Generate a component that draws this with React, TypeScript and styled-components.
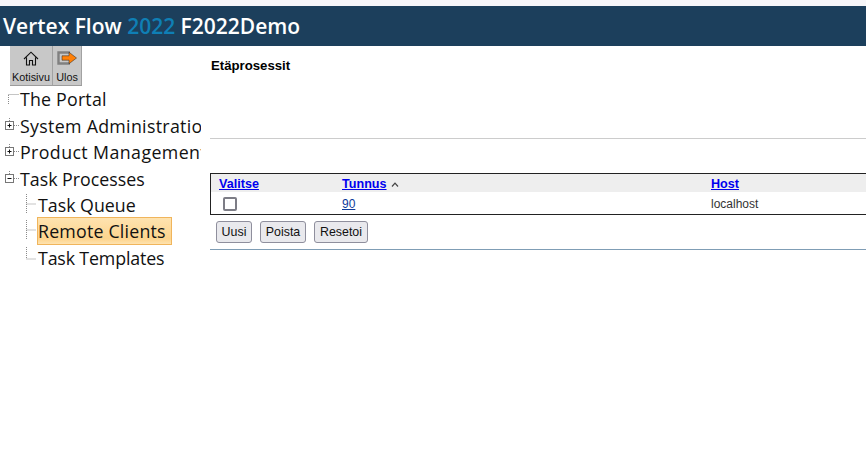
import React from "react";
import styled, { createGlobalStyle } from "styled-components";

const GlobalStyle = createGlobalStyle`
  html, body {
    margin: 0;
    padding: 0;
    background: #ffffff;
    font-family: "Liberation Sans", Arial, sans-serif;
  }
`;

const Page = styled.div`
  width: 866px;
  height: 452px;
  overflow: hidden;
  background: #ffffff;
  display: flex;
  flex-direction: column;
`;

const TopStrip = styled.div`
  height: 6px;
  flex: none;
  background: #f6f6f9;
`;

const Header = styled.div`
  height: 40px;
  flex: none;
  background: #1c3f5c;
  color: #ffffff;
  display: flex;
  align-items: center;
  padding-left: 3px;
  font-family: "Open Sans", "Noto Sans", sans-serif;
  font-size: 21px;
  font-weight: 600;
  white-space: pre;
`;

const Year = styled.span`
  color: #0f7fb5;
`;

const Body = styled.div`
  display: flex;
  flex: 1;
`;

const Sidebar = styled.div`
  width: 201px;
  margin-right: 9px;
  flex: none;
  overflow: hidden;
`;

const Toolbar = styled.div`
  display: flex;
  margin-left: 10px;
  width: 72px;
  height: 40px;
  background: #c8c8c8;
  border-bottom: 1px solid #9c9c9c;
  box-sizing: border-box;
`;

const ToolButton = styled.div<{ $w: number }>`
  width: ${(p) => p.$w}px;
  display: flex;
  flex-direction: column;
  align-items: center;
  justify-content: space-between;
  padding: 5px 0 2px;
  box-sizing: border-box;
  border-right: 1px solid #a2a2a2;
  font-size: 10.8px;
  line-height: 12px;
  color: #111111;
`;

const Tree = styled.div`
  margin-top: 0.25px;
`;

const TreeRow = styled.div<{ $level: number }>`
  height: 26.4px;
  display: flex;
  align-items: center;
  padding-left: ${(p) => (p.$level ? 24 : 4)}px;
  white-space: nowrap;
  svg {
    flex: none;
  }
`;

const Label = styled.span<{ $selected?: boolean; $track?: number }>`
  font-family: "Open Sans", "Noto Sans", sans-serif;
  font-size: 17.8px;
  line-height: 24px;
  color: #111111;
  letter-spacing: ${(p) => p.$track ?? 0}px;
  ${(p) =>
    p.$selected &&
    `
    box-sizing: border-box;
    width: 135px;
    height: 28px;
    line-height: 26px;
    margin-left: -1px;
    background: linear-gradient(#fee3b0 0%, #fdd48d 80%, #fee3b0 100%);
    border: 1px solid #f0b55c;
  `}
`;

const Main = styled.div`
  flex: 1;
  min-width: 0;
`;

const Title = styled.div`
  padding-top: 13px;
  padding-left: 1px;
  font-size: 13.2px;
  font-weight: bold;
  line-height: 13px;
  color: #000000;
`;

const Rule = styled.div<{ $color: string }>`
  height: 1px;
  background: ${(p) => p.$color};
`;

const TitleArea = styled.div`
  height: 92px;
  border-bottom: 1px solid #cccccc;
`;

const Table = styled.div`
  margin-top: 34px;
  border: 1px solid #222222;
  border-right: none;
  box-sizing: border-box;
  height: 42px;
`;

const Cols = styled.div<{ $head?: boolean }>`
  display: grid;
  grid-template-columns: 123px 369px 1fr;
  padding: 1px 0 0 8px;
  box-sizing: border-box;
  height: ${(p) => (p.$head ? 18 : 22)}px;
  align-items: center;
  background: ${(p) => (p.$head ? "#eeeeee" : "#ffffff")};
  font-size: 12px;
  color: #333333;
`;

const HeadLink = styled.a`
  color: #0000ee;
  font-weight: bold;
  font-size: 12.6px;
  text-decoration: underline;
`;

const CellLink = styled.a`
  color: #0d3a9a;
  text-decoration: underline;
`;

const SortMark = styled.svg`
  margin-left: 4px;
  vertical-align: 1px;
`;

const Check = styled.div`
  width: 14px;
  height: 14px;
  margin-left: 4px;
  box-sizing: border-box;
  border: 2px solid #7d7d86;
  border-radius: 2px;
  background: #ffffff;
`;

const Buttons = styled.div`
  display: flex;
  gap: 8px;
  padding: 6px 0 6px 6px;
`;

const Button = styled.div<{ $w: number }>`
  width: ${(p) => p.$w}px;
  height: 22px;
  box-sizing: border-box;
  display: flex;
  align-items: center;
  justify-content: center;
  border: 1px solid #8f8f9d;
  border-radius: 3px;
  background: #e9e9ed;
  font-size: 12.4px;
  color: #111111;
`;

function HomeIcon() {
  return (
    <svg width="16" height="15" viewBox="0 0 16 15" fill="none" stroke="#111" strokeWidth="1.1">
      <path d="M1 8 L8 1.2 L15 8 M3.5 6.5 V14 H6.5 V9.5 H9.5 V14 H12.5 V6.5" />
    </svg>
  );
}

function ExitIcon() {
  return (
    <svg width="20" height="14" viewBox="0 0 20 14">
      <path d="M13 1.5 H1.5 V12.5 H13" fill="none" stroke="#808080" strokeWidth="2.4" />
      <path d="M5 4.8 H12 V1.2 L19.5 7 L12 12.8 V9.2 H5 Z" fill="#ff8008" stroke="#222" strokeWidth="0.5" />
    </svg>
  );
}

type ConnectorKind = "leaf" | "plus" | "minus" | "branch" | "last";

function Connector({ kind }: { kind: ConnectorKind }) {
  const dot = { stroke: "#8a8a8a", strokeDasharray: "1 1", fill: "none" };
  if (kind === "leaf") {
    return (
      <svg width="16" height="16" viewBox="0 0 16 16">
        <path d="M4.5 4 V13 M4.5 3.5 H15" {...dot} />
      </svg>
    );
  }
  if (kind === "plus" || kind === "minus") {
    return (
      <svg width="16" height="16" viewBox="0 0 16 16">
        <path d="M5.5 0 V3 M10 7.5 H15" {...dot} />
        <rect x="1.5" y="3.5" width="8" height="8" fill="#fff" stroke="#777" />
        <path d={kind === "plus" ? "M3.5 7.5 H7.5 M5.5 5.5 V9.5" : "M3.5 7.5 H7.5"} stroke="#111" />
      </svg>
    );
  }
  return (
    <svg width="14" height="24" viewBox="0 0 14 24">
      <path d={kind === "last" ? "M2.5 1 V13 M2.5 13 H12" : "M2.5 1 V21 M2.5 11 H12"} {...dot} />
    </svg>
  );
}

export default function App() {
  return (
    <Page>
      <GlobalStyle />
      <TopStrip />
      <Header>
        Vertex Flow <Year>2022</Year> F2022Demo
      </Header>
      <Body>
        <Sidebar>
          <Toolbar>
            <ToolButton $w={43}>
              <HomeIcon />
              Kotisivu
            </ToolButton>
            <ToolButton $w={29}>
              <ExitIcon />
              Ulos
            </ToolButton>
          </Toolbar>
          <Tree>
            <TreeRow $level={0}>
              <Connector kind="leaf" />
              <Label $track={0.2}>The Portal</Label>
            </TreeRow>
            <TreeRow $level={0}>
              <Connector kind="plus" />
              <Label $track={0.3}>System Administration</Label>
            </TreeRow>
            <TreeRow $level={0}>
              <Connector kind="plus" />
              <Label $track={0.4}>Product Management</Label>
            </TreeRow>
            <TreeRow $level={0}>
              <Connector kind="minus" />
              <Label>Task Processes</Label>
            </TreeRow>
            <TreeRow $level={1}>
              <Connector kind="branch" />
              <Label>Task Queue</Label>
            </TreeRow>
            <TreeRow $level={1}>
              <Connector kind="branch" />
              <Label $selected $track={0.2}>Remote Clients</Label>
            </TreeRow>
            <TreeRow $level={1}>
              <Connector kind="last" />
              <Label $track={-0.15}>Task Templates</Label>
            </TreeRow>
          </Tree>
        </Sidebar>
        <Main>
          <TitleArea>
            <Title>Etäprosessit</Title>
          </TitleArea>
          <Table>
            <Cols $head>
              <span>
                <HeadLink href="#">Valitse</HeadLink>
              </span>
              <span>
                <HeadLink href="#">Tunnus</HeadLink>
                <SortMark width="8" height="5" viewBox="0 0 8 5">
                  <path d="M1 4.5 L4 1.2 L7 4.5" fill="none" stroke="#444" strokeWidth="1.2" />
                </SortMark>
              </span>
              <span>
                <HeadLink href="#">Host</HeadLink>
              </span>
            </Cols>
            <Cols>
              <Check />
              <span>
                <CellLink href="#">90</CellLink>
              </span>
              <span>localhost</span>
            </Cols>
          </Table>
          <Buttons>
            <Button $w={36}>Uusi</Button>
            <Button $w={46}>Poista</Button>
            <Button $w={54}>Resetoi</Button>
          </Buttons>
          <Rule $color="#7f9db5" />
        </Main>
      </Body>
    </Page>
  );
}
